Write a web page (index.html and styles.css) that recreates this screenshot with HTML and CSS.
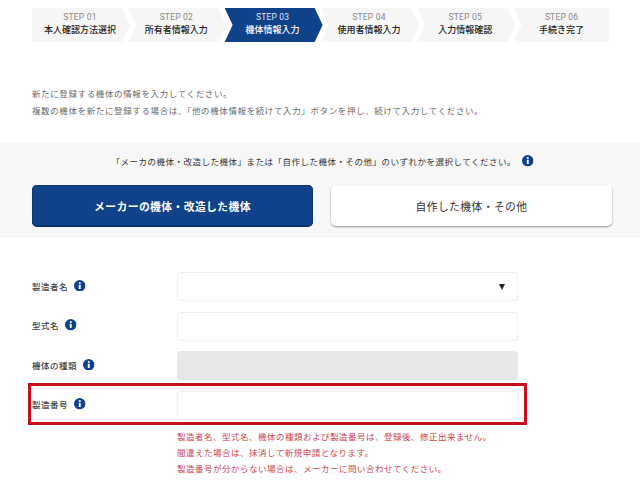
FILE: index.html
```html
<!DOCTYPE html>
<html lang="ja">
<head>
<meta charset="utf-8">
<title>機体情報入力</title>
<link rel="stylesheet" href="styles.css">
</head>
<body>
<ol class="steps">
  <li class="step first"><span class="num">STEP 01</span><span class="name">本人確認方法選択</span></li>
  <li class="step"><span class="num">STEP 02</span><span class="name">所有者情報入力</span></li>
  <li class="step current"><span class="num">STEP 03</span><span class="name">機体情報入力</span></li>
  <li class="step"><span class="num">STEP 04</span><span class="name">使用者情報入力</span></li>
  <li class="step"><span class="num">STEP 05</span><span class="name">入力情報確認</span></li>
  <li class="step last"><span class="num">STEP 06</span><span class="name">手続き完了</span></li>
</ol>

<div class="intro">
  <p>新たに登録する機体の情報を入力してください。</p>
  <p>複数の機体を新たに登録する場合は、「他の機体情報を続けて入力」ボタンを押し、続けて入力してください。</p>
</div>

<section class="band">
  <p class="band-text">「メーカの機体・改造した機体」または「自作した機体・その他」のいずれかを選択してください。<svg class="info band-info" viewBox="0 0 12 12"><use href="#i"/></svg></p>
  <div class="choices">
    <button class="choice selected" type="button">メーカーの機体・改造した機体</button>
    <button class="choice" type="button">自作した機体・その他</button>
  </div>
</section>

<svg class="defs" width="0" height="0"><symbol id="i" viewBox="0 0 12 12"><circle cx="6" cy="6" r="6" fill="#10428a"/><circle cx="6" cy="3.2" r="1.1" fill="#fff"/><rect x="5" y="5" width="2" height="4.4" fill="#fff"/></symbol></svg>

<form class="form">
  <div class="row"><label class="label">製造者名<svg class="info" viewBox="0 0 12 12"><use href="#i"/></svg></label><div class="field select"><span class="arrow"></span></div></div>
  <div class="row"><label class="label">型式名<svg class="info" viewBox="0 0 12 12"><use href="#i"/></svg></label><div class="field"></div></div>
  <div class="row"><label class="label">機体の種類<svg class="info" viewBox="0 0 12 12"><use href="#i"/></svg></label><div class="field disabled"></div></div>
  <div class="row marked"><label class="label">製造番号<svg class="info" viewBox="0 0 12 12"><use href="#i"/></svg></label><div class="field"></div></div>
  <div class="notes">
    <p>製造者名、型式名、機体の種類および製造番号は、登録後、修正出来ません。</p>
    <p>間違えた場合は、抹消して新規申請となります。</p>
    <p>製造番号が分からない場合は、メーカーに問い合わせてください。</p>
  </div>
</form>
</body>
</html>
```

FILE: styles.css
```css
*, *::before, *::after { box-sizing: border-box; }
html, body { margin: 0; padding: 0; }
body {
  width: 640px;
  height: 484px;
  overflow: hidden;
  background: #fff;
  color: #333;
  font-family: "Noto Sans CJK JP", "Noto Sans", sans-serif;
}
p { margin: 0; }
.defs { position: absolute; }

.steps {
  list-style: none;
  display: flex;
  margin: 8px 0 0 32px;
  padding: 0;
  width: 578px;
  height: 34px;
}
.step {
  flex: 0 0 98px;
  margin-right: -1.7px;
  display: flex;
  flex-direction: column;
  align-items: center;
  background: #f6f6f6;
  clip-path: polygon(0 0, 90px 0, 100% 50%, 90px 100%, 0 100%, 8px 50%);
  padding: 4px 2px 0 0;
}
.step.first { clip-path: polygon(0 0, 90px 0, 100% 50%, 90px 100%, 0 100%); }
.step.last { flex-basis: 96px; margin-right: 0; padding-right: 0; clip-path: polygon(0 0, 100% 0, 100% 100%, 0 100%, 8px 50%); }
.num {
  font-family: Roboto, "Noto Sans", sans-serif;
  font-size: 8.5px;
  line-height: 11px;
  letter-spacing: .2px;
  color: #888;
}
.name {
  font-size: 9px;
  line-height: 14px;
  font-weight: 500;
  color: #222;
}
.step.current { background: #10428a; }
.step.current .name { color: #fff; }
.step.current .num { color: #dfe6f2; }

.intro {
  margin: 43px 0 0 32px;
  font-size: 8.5px;
  letter-spacing: .62px;
  line-height: 17px;
  color: #6a6a6a;
}

.band {
  margin-top: 24px;
  height: 95px;
  padding: 9px 28px 0 32px;
  background: #f7f7f7;
}
.band-text {
  display: flex;
  align-items: center;
  justify-content: center;
  height: 18px;
  padding-left: 1px;
  font-size: 8.5px;
  letter-spacing: .5px;
  color: #333;
}
.band-info { margin-left: 13px; }
.choices {
  display: flex;
  gap: 18px;
  margin-top: 15px;
}
.choice {
  flex: 0 0 281px;
  height: 41px;
  border: 0;
  border-radius: 5px;
  padding: 0;
  font-family: inherit;
  font-size: 10.8px;
  letter-spacing: .4px;
  background: #fff;
  color: #333;
  box-shadow: 0 1px 2px rgba(0, 0, 0, .4);
}
.choice.selected {
  background: #10428a;
  color: #fff;
  font-weight: 700;
  box-shadow: inset 0 0 0 1px #0c3673, 0 1px 0 #0a2a5c;
}

.form { padding: 34px 0 0 32px; }
.row {
  position: relative;
  display: flex;
  align-items: center;
  height: 29px;
  margin-bottom: 10.5px;
}
.row.marked { margin-bottom: 0; }
.label {
  flex: 0 0 145px;
  display: flex;
  align-items: center;
  padding-bottom: 2px;
  font-size: 8.5px;
  letter-spacing: .5px;
  font-weight: 500;
  color: #444;
}
.info { width: 11.5px; height: 11.5px; margin-left: 6px; flex: none; }
.field {
  width: 341px;
  height: 29px;
  background: #fff;
  border: 1px solid #efefef;
  border-radius: 3px;
}
.field.disabled { background: #e8e8e8; border-color: #e8e8e8; }
.field.select {
  display: flex;
  align-items: center;
  justify-content: flex-end;
  padding-right: 12px;
}
.arrow {
  width: 0;
  height: 0;
  border-left: 3.5px solid transparent;
  border-right: 3.5px solid transparent;
  border-top: 6px solid #222;
}
.row.marked::after {
  content: "";
  position: absolute;
  left: -4px;
  top: -8px;
  width: 499px;
  height: 42px;
  border: 3px solid #c8101c;
}
.notes {
  margin: 8px 0 0 145px;
  font-size: 8.5px;
  letter-spacing: .5px;
  line-height: 16px;
  color: #cc4450;
}
```
